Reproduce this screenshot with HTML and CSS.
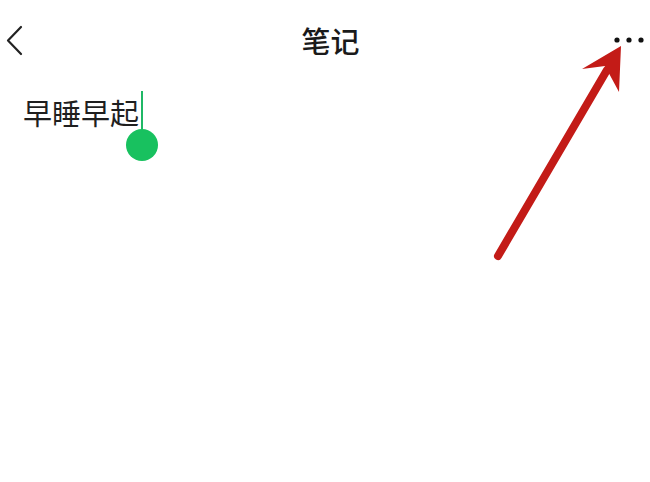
FILE: index.html
```html
<!DOCTYPE html>
<html lang="zh">
<head>
<meta charset="utf-8">
<title>笔记</title>
<link rel="stylesheet" href="styles.css">
</head>
<body>
<div class="page">
  <header class="header">
    <div class="left">
      <svg class="back" width="20" height="32" viewBox="0 0 20 32">
        <polyline points="16,3 3,16.5 16,30" fill="none" stroke="#222" stroke-width="2.2" stroke-linecap="round" stroke-linejoin="round"/>
      </svg>
    </div>
    <h1 class="title">笔记</h1>
    <div class="right">
      <svg class="more" width="34" height="8" viewBox="0 0 34 8">
        <circle cx="5" cy="4" r="2.6" fill="#111"/>
        <circle cx="17" cy="4" r="2.6" fill="#111"/>
        <circle cx="29" cy="4" r="2.6" fill="#111"/>
      </svg>
    </div>
  </header>
  <main class="editor">
    <p class="note">早睡早起<span class="cursor"><span class="handle"></span></span></p>
  </main>
  <svg class="annotation" width="650" height="482" viewBox="0 0 650 482">
    <line x1="498" y1="256" x2="607" y2="70" stroke="#c31b17" stroke-width="8" stroke-linecap="round"/>
    <polygon points="621,46 582,69 605,66 619,92" fill="#c31b17"/>
  </svg>
</div>
</body>
</html>
```

FILE: styles.css
```css
html, body {
  margin: 0;
  padding: 0;
  background: #ffffff;
}

body {
  font-family: "Noto Sans CJK SC", "Noto Sans", sans-serif;
  color: #1a1a1a;
}

.page {
  position: relative;
  width: 650px;
  height: 482px;
  overflow: hidden;
}

.header {
  display: grid;
  grid-template-columns: 1fr auto 1fr;
  align-items: center;
  height: 80px;
  padding: 0 4px 0 5px;
}

.left {
  display: flex;
  align-items: center;
  justify-content: flex-start;
}

.right {
  display: flex;
  align-items: center;
  justify-content: flex-end;
}

.back, .more {
  display: block;
}

.title {
  margin: 0 0 0 10px;
  font-size: 29px;
  font-weight: 500;
  line-height: 40px;
  color: #1a1a1a;
}

.editor {
  padding: 11px 0 0 23px;
}

.note {
  margin: 0;
  font-size: 29px;
  line-height: 38px;
  color: #1f1f1f;
}

.cursor {
  position: relative;
  display: inline-block;
  width: 2px;
  height: 42px;
  margin-left: 2px;
  vertical-align: -8px;
  background: #1fb866;
}

.handle {
  position: absolute;
  left: -15px;
  top: 38px;
  width: 32px;
  height: 32px;
  border-radius: 50%;
  background: #18c15f;
}

.annotation {
  position: absolute;
  left: 0;
  top: 0;
  pointer-events: none;
}
```
